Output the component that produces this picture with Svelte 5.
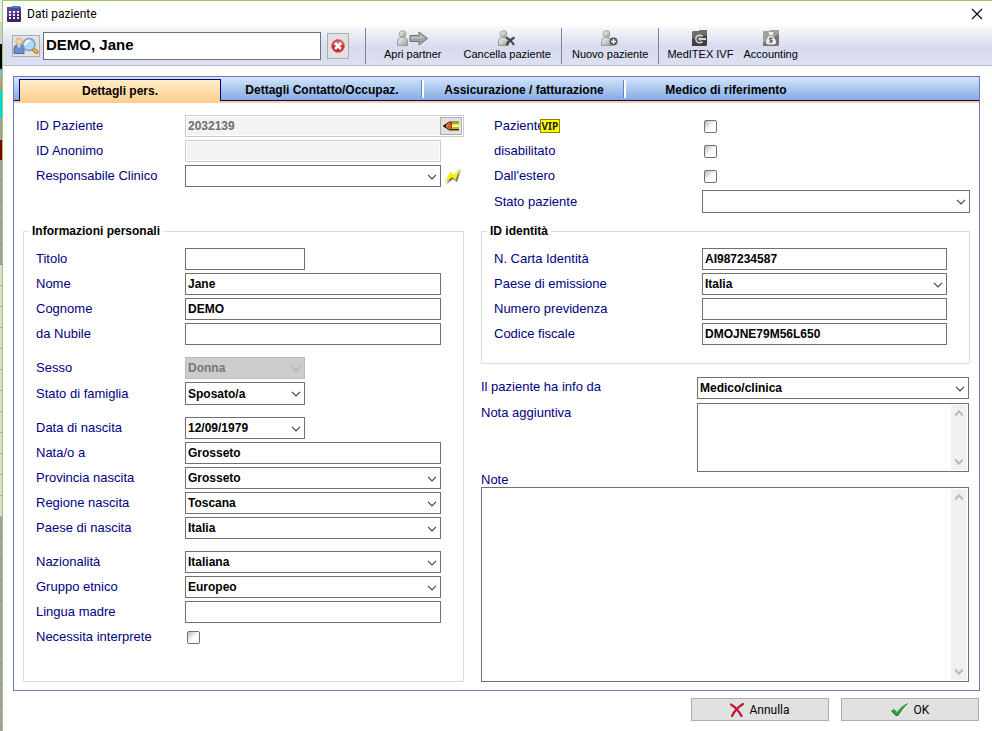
<script lang="ts">
  let patientName = $state("DEMO, Jane");
  let activeTab = $state(0);

  const tabs = [
    "Dettagli pers.",
    "Dettagli Contatto/Occupaz.",
    "Assicurazione / fatturazione",
    "Medico di riferimento",
  ];

  const personal = [
    [
      { id: "titolo", label: "Titolo", type: "text", value: "", short: true },
      { id: "nome", label: "Nome", type: "text", value: "Jane" },
      { id: "cognome", label: "Cognome", type: "text", value: "DEMO" },
      { id: "nubile", label: "da Nubile", type: "text", value: "" },
    ],
    [
      { id: "sesso", label: "Sesso", type: "select", value: "Donna", short: true, disabled: true },
      { id: "famiglia", label: "Stato di famiglia", type: "select", value: "Sposato/a", short: true, tall: true },
    ],
    [
      { id: "nascita", label: "Data di nascita", type: "select", value: "12/09/1979", short: true },
      { id: "nato-a", label: "Nata/o a", type: "text", value: "Grosseto" },
      { id: "provincia", label: "Provincia nascita", type: "select", value: "Grosseto" },
      { id: "regione", label: "Regione nascita", type: "select", value: "Toscana" },
      { id: "paese", label: "Paese di nascita", type: "select", value: "Italia" },
    ],
    [
      { id: "nazionalita", label: "Nazionalità", type: "select", value: "Italiana" },
      { id: "etnico", label: "Gruppo etnico", type: "select", value: "Europeo" },
      { id: "lingua", label: "Lingua madre", type: "text", value: "" },
      { id: "interprete", label: "Necessita interprete", type: "checkbox" },
    ],
  ];

  const identity = [
    { id: "carta", label: "N. Carta Identità", type: "text", value: "AI987234587" },
    { id: "emissione", label: "Paese di emissione", type: "select", value: "Italia" },
    { id: "previdenza", label: "Numero previdenza", type: "text", value: "" },
    { id: "fiscale", label: "Codice fiscale", type: "text", value: "DMOJNE79M56L650" },
  ];
</script>

{#snippet chevron()}
  <svg class="chevron" width="10" height="6" viewBox="0 0 10 6" aria-hidden="true">
    <path d="M1 .8l4 4 4-4" fill="none" stroke="currentColor" stroke-width="1.2" />
  </svg>
{/snippet}

{#snippet field(f)}
  <div class="row">
    <label for={f.id}>{f.label}</label>
    {#if f.type == "select"}
      <div class="select" class:short={f.short} class:tall={f.tall} class:off={f.disabled}>
        <select id={f.id} disabled={f.disabled}>
          <option>{f.value}</option>
        </select>
        {@render chevron()}
      </div>
    {:else if f.type == "checkbox"}
      <input type="checkbox" id={f.id} />
    {:else}
      <input type="text" id={f.id} class:short={f.short} value={f.value} />
    {/if}
  </div>
{/snippet}

{#snippet scrollbar()}
  <div class="scroll" aria-hidden="true">
    <svg width="8" height="7" viewBox="0 0 8 7"><path d="M0 5.500l4-4 4 4" /></svg>
    <svg width="8" height="7" viewBox="0 0 8 7"><path d="M0 1.500l4 4 4-4" /></svg>
  </div>
{/snippet}

{#snippet person()}
  <path d="M.5 15.500v-4q0-3.500 3-4h4q3 .5 3 4v4z" fill="url(#grey)" stroke="#8a8a8a" stroke-width=".8" />
  <circle cx="5.500" cy="4" r="3.400" fill="url(#grey)" stroke="#949494" stroke-width=".8" />
{/snippet}

<div class="screen">
  <div class="backdrop"></div>
  <main>
    <header class="titlebar">
      <svg width="14" height="16" viewBox="0 0 14 16" aria-hidden="true">
        <rect y="1" width="14" height="15" rx="1" fill="#3b2468" />
        <path d="M0 2q0-1 1-1h12q1 0 1 1v4L0 11z" fill="#5b4590" />
        <path d="M5 0h8v2H4z" fill="#2a86cc" />
        <path
          d="M2 5h2v2H2zM6 5h2v2H6zM10 5h2v2h-2zM2 8h2v2H2zM6 8h2v2H6zM10 8h2v2h-2zM2 11h2v2H2zM6 11h2v2H6zM10 11h2v2h-2z"
          fill="#f0ecfa"
        />
      </svg>
      <h1>Dati paziente</h1>
      <button class="close" aria-label="Chiudi">
        <svg width="12" height="12" viewBox="0 0 12 12">
          <path d="M1 1l10 10M11 1L1 11" stroke="#000" stroke-width="1.1" />
        </svg>
      </button>
    </header>

    <div class="toolbar">
      <button class="search" aria-label="Cerca paziente">
        <svg width="26" height="18" viewBox="0 0 26 18">
          <path d="M1 16.500V12q0-3.500 3-4h4q3 .5 3 4v4.500z" fill="#6c90cc" stroke="#4068a8" />
          <path d="M4 8l2 3 2-3" fill="#dfe8f8" />
          <circle cx="6" cy="4.500" r="3.300" fill="#f3d3a4" stroke="#c09a60" stroke-width=".7" />
          <path d="M20.500 12.500l3 2.500" stroke="#b87820" stroke-width="4" stroke-linecap="round" />
          <path d="M20.500 12.500l3 2.500" stroke="#f4b850" stroke-width="2" stroke-linecap="round" />
          <circle cx="16" cy="7.500" r="6" fill="#a9dcf8" stroke="#7c9cc0" stroke-width="1.500" />
          <path d="M12.500 8q0-4 4.500-4.500" fill="none" stroke="#fff" stroke-width="2" />
        </svg>
      </button>
      <input class="name" type="text" aria-label="Paziente" bind:value={patientName} />
      <button class="clear" aria-label="Cancella" onclick={() => (patientName = "")}>
        <svg width="14" height="14" viewBox="0 0 14 14">
          <circle cx="7" cy="7" r="6.500" fill="#c4262e" stroke="#d98084" />
          <path d="M1.500 6q1-4 5.500-4.500T12.500 6Q7 8 1.500 6" fill="#de6a70" />
          <path d="M4 4l6 6M10 4l-6 6" stroke="#fff" stroke-width="2.600" />
        </svg>
      </button>

      <div class="group first">
        <button>
          <svg width="31" height="16" viewBox="0 0 31 16">
            <defs>
              <linearGradient id="grey" x2="1" y2="1">
                <stop stop-color="#f8f8f8" />
                <stop offset="1" stop-color="#9c9c9c" />
              </linearGradient>
            </defs>
            {@render person()}
            <path d="M13 5.500h9V2l8.500 6.500L22 15v-3.500h-9z" fill="#a4a4a4" stroke="#707070" />
            <path d="M14 6.500h9V4l4.500 4.500H14z" fill="#bebebe" />
          </svg>
          Apri partner
        </button>
        <button>
          <svg width="18" height="16" viewBox="0 0 18 16">
            {@render person()}
            <path d="M8 7.500q5 2 8 7.500M16.500 7.500Q11 10 8.500 15" fill="none" stroke="#444" stroke-width="2.200" />
          </svg>
          Cancella paziente
        </button>
      </div>
      <div class="group">
        <button>
          <svg width="18" height="16" viewBox="0 0 18 16">
            {@render person()}
            <circle cx="12.500" cy="11.500" r="4" fill="#585858" />
            <path d="M12.500 9v5M10 11.500h5" stroke="#fff" stroke-width="1.400" />
          </svg>
          Nuovo paziente
        </button>
      </div>
      <div class="group last">
        <button>
          <svg width="16" height="16" viewBox="0 0 16 16">
            <path d="M0 2l2-1h5l1-1h7v15l-1 1H0z" fill="#404040" />
            <path d="M0 2l2-1h5l1-1h7v5L0 9z" fill="#6e6e6e" />
            <path d="M10.500 6.500a3.800 3.800 0 1 0 0 5" fill="none" stroke="#dcdcdc" stroke-width="1.500" />
            <path d="M8 9h6" stroke="#fff" stroke-width="1.600" />
            <circle cx="8" cy="9" r="1.800" fill="#d0d0d0" />
          </svg>
          MedITEX IVF
        </button>
        <button>
          <svg width="16" height="16" viewBox="0 0 16 16">
            <path d="M0 2l2-1h5l1-1h8v15l-1 1H0z" fill="#747474" />
            <path d="M0 2l2-1h5l1-1h8v4L0 13z" fill="#a0a0a0" />
            <path d="M5.500 2h5L9.500 5h-3zM6.500 6h3q4 4 3.500 7-.5 1.500-5 1.500T3 13q0-4 3.500-7z" fill="#f2f2f2" />
            <path d="M9.800 8.300Q6 7.500 6.300 9.300t3 1.200q.8 2.300-3.300 1.500M8 7.200v6" fill="none" stroke="#555" />
          </svg>
          Accounting
        </button>
      </div>
    </div>

    <section class="panel">
      <div class="tabs" role="tablist">
        {#each tabs as tab, i}
          <button role="tab" aria-selected={activeTab == i} class:active={activeTab == i} onclick={() => (activeTab = i)}>
            {tab}
          </button>
        {/each}
      </div>

      <div class="content">
        <div class="left rows">
          <div class="row wide">
            <label for="id-paziente">ID Paziente</label>
            <div class="readonly">
              <input type="text" id="id-paziente" value="2032139" readonly />
              <button class="edit" aria-label="Modifica ID">
                <svg width="17" height="12" viewBox="0 0 17 12">
                  <path d="M0 6l6-4.500h10v9H6z" fill="#33300c" />
                  <path d="M2 6l5-4v8z" fill="#f0b078" />
                  <path d="M0 6l3-2v4z" fill="#000" />
                  <path d="M4 5l3-2.500 2 3.500-2 3.500L4 7z" fill="#e0582c" />
                  <path d="M8 2h8v2H9z" fill="#9aac24" />
                  <path d="M9 4h7v2H9z" fill="#f4ee38" />
                  <path d="M9 6h7v1H9z" fill="#fffce0" />
                  <path d="M9 7h7v2H8z" fill="#c4b428" />
                </svg>
              </button>
            </div>
          </div>
          <div class="row">
            <label for="id-anonimo">ID Anonimo</label>
            <div class="readonly">
              <input type="text" id="id-anonimo" readonly />
            </div>
          </div>
          <div class="row wide">
            <label for="responsabile">Responsabile Clinico</label>
            <div class="select">
              <select id="responsabile"><option></option></select>
              {@render chevron()}
            </div>
            <button class="flash" aria-label="Imposta responsabile">
              <svg width="16" height="16" viewBox="0 0 16 16">
                <path d="M2 15.500L7 6l3 4 5.500-7.500L12 14l-4-3z" fill="#666" stroke="#b4b4b4" stroke-width=".8" />
                <path d="M.5 14L5.500 4l3.500 3.500L14.500 1 10.500 12 7 9z" fill="#fdf400" stroke="#d8d000" stroke-width=".6" />
              </svg>
            </button>
          </div>
        </div>

        <div class="right rows">
          <div class="row">
            <label for="vip">Paziente<span class="vip">VIP</span></label>
            <input type="checkbox" id="vip" />
          </div>
          {@render field({ id: "disabilitato", label: "disabilitato", type: "checkbox" })}
          {@render field({ id: "estero", label: "Dall'estero", type: "checkbox" })}
          <div class="row wide">
            <label for="stato">Stato paziente</label>
            <div class="select tall">
              <select id="stato"><option></option></select>
              {@render chevron()}
            </div>
          </div>
        </div>

        <fieldset class="left">
          <legend>Informazioni personali</legend>
          <div class="groups">
            {#each personal as group}
              <div class="rows">
                {#each group as f}
                  {@render field(f)}
                {/each}
              </div>
            {/each}
          </div>
        </fieldset>

        <div class="right lower">
          <fieldset>
            <legend>ID identità</legend>
            <div class="rows">
              {#each identity as f}
                {@render field(f)}
              {/each}
            </div>
          </fieldset>
          <div class="notes">
            <div class="note-row">
              <label for="info">Il paziente ha info da</label>
              <div class="select">
                <select id="info"><option>Medico/clinica</option></select>
                {@render chevron()}
              </div>
            </div>
            <div class="note-row">
              <label for="nota">Nota aggiuntiva</label>
              <div class="memo small">
                <textarea id="nota"></textarea>
                {@render scrollbar()}
              </div>
            </div>
            <label for="note">Note</label>
            <div class="memo big">
              <textarea id="note"></textarea>
              {@render scrollbar()}
            </div>
          </div>
        </div>
      </div>
    </section>

    <footer>
      <button>
        <svg width="14" height="14" viewBox="0 0 14 14" aria-hidden="true">
          <path d="M1 1.500Q7 5 11.500 13M13 1Q6 5 2 13" fill="none" stroke="#c01838" stroke-width="2.200" stroke-linecap="round" />
        </svg>
        Annulla
      </button>
      <button>
        <svg width="18" height="14" viewBox="0 0 18 14" aria-hidden="true">
          <path d="M0 8l3-2 3 3q5-7 11.500-9Q11 6 7 13H5z" fill="#1d8a34" />
          <path d="M2 7.500l4 3Q10 4 15 1.500" fill="none" stroke="#58b868" />
        </svg>
        OK
      </button>
    </footer>
  </main>
</div>

<style>
  :global(body) {
    background: #fff;
    font-family: "Liberation Sans", Arial, sans-serif;
    font-size: 12px;
  }

  * {
    box-sizing: border-box;
  }

  button,
  input,
  select,
  textarea {
    margin: 0;
    font: inherit;
    color: #000;
    border-radius: 0;
  }

  svg {
    display: block;
    flex: none;
  }

  .screen {
    display: flex;
    min-height: 100vh;
  }

  /* sliver of the window behind the dialog */
  .backdrop {
    width: 2px;
    background:
      repeating-linear-gradient(transparent 0 20px, #80808080 20px 21px) 0 160px no-repeat,
      linear-gradient(
        #eee 0 22px, #d0d0d0 22px 44px, #000 44px 68px, #8fb4d8 70px, #c09060 88px,
        #00d8d8 91px 118px, #a0a0a0 118px 140px, #800000 140px 160px,
        #a0a0a0 160px 265px, #dcdcd4 265px 517px, #a0a0a0 517px
      );
  }

  main {
    flex: 1;
    min-width: 0;
    border-top: 1px solid #9ccb5c;
    border-left: 1px solid #9ccb5c;
  }

  .titlebar {
    display: flex;
    align-items: center;
    gap: 6px;
    height: 25px;
    padding: 0 8px 0 4px;
  }

  h1 {
    flex: 1;
    margin: 0;
    font: 12px Roboto, "Open Sans", sans-serif;
  }

  .close {
    padding: 1px;
    border: 0;
    background: none;
  }

  .toolbar {
    display: flex;
    align-items: center;
    height: 40px;
    padding-left: 9px;
    border-bottom: 1px solid #b8bacb;
    background: linear-gradient(#f8f9fd, #d7dbee 55%, #dce0f2);
  }

  .search,
  .clear {
    display: flex;
    align-items: center;
    justify-content: center;
    padding: 0;
    border: 1px solid #adadad;
    background: #e1e1e1;
  }

  .search {
    width: 28px;
    height: 22px;
  }

  .clear {
    width: 22px;
    height: 26px;
  }

  .group {
    display: flex;
    height: 36px;
    border-left: 1px solid #85858f;
  }

  .group.first {
    gap: 2px;
    margin-left: 16px;
    padding-left: 8px;
  }

  .group.last {
    padding-left: 3px;
  }

  .group button {
    display: flex;
    flex-direction: column;
    align-items: center;
    gap: 1px;
    padding: 2px 10px 0;
    border: 0;
    background: none;
    font-size: 11px;
    line-height: 14px;
    white-space: nowrap;
  }

  .group.last button {
    padding: 2px 5px 0;
  }

  .panel {
    margin: 10px 12px 0 10px;
    border: 1px solid #7076b6;
  }

  .tabs {
    display: flex;
    height: 26px;
    border-bottom: 2px solid #ffcf90;
    background: linear-gradient(#d3e6fb, #a6c4ee 55%, #84a8e0);
  }

  .tabs::before {
    content: "";
    width: 5px;
    border-bottom: 1px solid #000080;
  }

  .tabs::after {
    content: "";
    flex: 1;
    border-bottom: 1px solid #000080;
  }

  .tabs button {
    position: relative;
    width: 202px;
    padding: 3px 0 0;
    border: 0;
    border-bottom: 1px solid #000080;
    background: none;
    font-weight: bold;
  }

  .tabs button:not(.active, :last-child)::after {
    content: "";
    position: absolute;
    top: 3px;
    right: -1px;
    bottom: 2px;
    width: 2px;
    border-left: 1px solid #5c86cc;
    background: #fff;
  }

  .tabs button.active {
    margin-top: 2px;
    padding: 0;
    border: 1px solid #000080;
    border-bottom: 0;
    background: linear-gradient(#ffedc8, #ffcf90);
  }

  .content {
    display: grid;
    grid-template-columns: 441fr 489fr;
    grid-template-rows: auto 1fr;
    gap: 11px 17px;
    padding: 12px 9px 8px;
  }

  .rows {
    display: flex;
    flex-direction: column;
    gap: 3px;
  }

  .row {
    display: flex;
    align-items: center;
    min-height: 22px;
    padding: 0 23px 0 13px;
  }

  .row.wide {
    padding-right: 0;
  }

  fieldset .row {
    padding: 0 22px 0 12px;
  }

  label {
    color: #000080;
    font-size: 13px;
    line-height: 14px;
  }

  .row label {
    flex: none;
  }

  .left label {
    width: 149px;
  }

  .right .row label {
    display: flex;
    align-items: center;
    width: 208px;
    height: 14px;
  }

  input[type="text"] {
    flex: 1;
    min-width: 0;
    height: 22px;
    padding: 0 2px;
    border: 1px solid #707070;
    background: #fff;
    font-weight: bold;
  }

  .toolbar input.name {
    flex: none;
    width: 278px;
    height: 28px;
    margin: 0 6px 0 3px;
    padding-bottom: 2px;
    font-size: 15px;
  }

  .select {
    position: relative;
    display: flex;
    flex: 1;
    height: 22px;
    color: #444;
  }

  .select.tall {
    height: 23px;
  }

  .row .short {
    flex: none;
    width: 120px;
  }

  select {
    width: 100%;
    padding: 0 18px 0 2px;
    border: 1px solid #707070;
    background: #fff;
    font-weight: bold;
    appearance: none;
  }

  .chevron {
    position: absolute;
    top: 9px;
    right: 4px;
    pointer-events: none;
  }

  .off {
    color: #aaa;
  }

  .off select {
    border-color: #bbb;
    background: #ccc;
    color: #777;
    opacity: 1;
  }

  input[type="checkbox"] {
    width: 13px;
    height: 13px;
    margin-left: 2px;
    border: 1px solid #707070;
    border-radius: 2px;
    background: linear-gradient(135deg, #bbb, #fff 55%);
    appearance: none;
  }

  input[type="checkbox"]:checked {
    background: #000080;
  }

  .readonly {
    display: flex;
    flex: 1;
    align-items: center;
    min-width: 0;
    height: 22px;
    padding: 1px;
    border: 1px solid #ccc;
  }

  .readonly input[type="text"] {
    height: 18px;
    padding: 0 1px;
    border: 0;
    background: #f3f3f3;
    color: #6d6d6d;
  }

  .edit {
    display: flex;
    align-items: center;
    justify-content: center;
    width: 22px;
    height: 18px;
    padding: 0;
    border: 1px solid #adadad;
    background: #e1e1e1;
  }

  .flash {
    width: 23px;
    padding: 0 0 0 4px;
    border: 0;
    background: none;
  }

  .vip {
    margin-left: -5px;
    padding: 0 1px;
    border: 1px solid #8a8600;
    background: #ff0;
    color: #222;
    font: bold 10px/12px "Noto Sans", sans-serif;
  }

  fieldset {
    min-width: 0;
    margin: 0;
    padding: 10px 0 18px;
    border: 1px solid #dcdcdc;
  }

  legend {
    margin-left: 5px;
    padding: 0 3px;
    font-weight: bold;
    line-height: 14px;
  }

  .groups {
    display: flex;
    flex-direction: column;
    gap: 12px;
    padding-bottom: 15px;
  }

  .lower {
    display: flex;
    flex-direction: column;
    gap: 13px;
  }

  .notes {
    display: flex;
    flex: 1;
    flex-direction: column;
    padding-right: 1px;
  }

  .note-row {
    display: flex;
    margin-bottom: 4px;
  }

  .note-row:nth-child(2) {
    margin-bottom: 1px;
  }

  .note-row label {
    width: 216px;
    padding-top: 3px;
  }

  .memo {
    display: flex;
    flex: 1;
    padding: 1px;
    border: 1px solid #707070;
  }

  .memo.small {
    height: 69px;
  }

  .memo.big {
    min-height: 195px;
  }

  textarea {
    flex: 1;
    min-width: 0;
    padding: 2px;
    border: 0;
    outline: 0;
    background: #fff;
    resize: none;
  }

  .scroll {
    display: flex;
    flex-direction: column;
    align-items: center;
    justify-content: space-between;
    width: 16px;
    padding: 5px 0;
    background: #f0f0f0;
  }

  .scroll path {
    fill: none;
    stroke: #b8b8b8;
    stroke-width: 2;
  }

  footer {
    display: flex;
    justify-content: flex-end;
    gap: 12px;
    padding: 7px 13px 8px;
  }

  footer button {
    display: flex;
    align-items: center;
    justify-content: center;
    gap: 5px;
    width: 138px;
    height: 23px;
    border: 1px solid #adadad;
    background: #e1e1e1;
    font: 12px Roboto, "Open Sans", sans-serif;
  }
</style>
